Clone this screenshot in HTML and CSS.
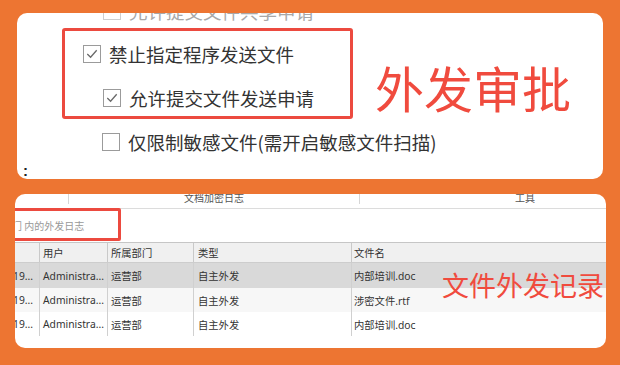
FILE: index.html
```html
<!DOCTYPE html>
<html lang="zh-CN">
<head>
<meta charset="utf-8">
<link rel="stylesheet" href="styles.css">
</head>
<body>
<div class="page">
  <section class="card card-top">
    <div class="opts">
      <div class="row faded">
        <span class="cb"></span>
        <span class="lbl">允许提交文件共享申请</span>
      </div>
      <div class="redbox">
        <div class="row">
          <span class="cb"><svg viewBox="0 0 17 17"><polyline points="3.5,8.5 7,12 13.5,4.5"/></svg></span>
          <span class="lbl">禁止指定程序发送文件</span>
        </div>
        <div class="row row-sub">
          <span class="cb"><svg viewBox="0 0 17 17"><polyline points="3.5,8.5 7,12 13.5,4.5"/></svg></span>
          <span class="lbl">允许提交文件发送申请</span>
        </div>
      </div>
      <div class="row row-last">
        <span class="cb"></span>
        <span class="lbl">仅限制敏感文件(需开启敏感文件扫描)</span>
      </div>
      <div class="colon">:</div>
    </div>
    <div class="title">外发审批</div>
  </section>

  <section class="card card-bottom">
    <div class="tabs">
      <div class="tab tab1"></div>
      <div class="tab tab2">文档加密日志</div>
      <div class="tab tab3">工具</div>
    </div>
    <div class="filter">
      <div class="filter-box">门 内的外发日志</div>
    </div>
    <div class="table">
      <div class="tr th">
        <div class="td c1"></div>
        <div class="td c2">用户</div>
        <div class="td c3">所属部门</div>
        <div class="td c4">类型</div>
        <div class="td c5">文件名</div>
      </div>
      <div class="tr sel">
        <div class="td c1">19...</div>
        <div class="td c2">Administra...</div>
        <div class="td c3">运营部</div>
        <div class="td c4">自主外发</div>
        <div class="td c5">内部培训.doc</div>
      </div>
      <div class="tr alt">
        <div class="td c1">19...</div>
        <div class="td c2">Administra...</div>
        <div class="td c3">运营部</div>
        <div class="td c4">自主外发</div>
        <div class="td c5">涉密文件.rtf</div>
      </div>
      <div class="tr">
        <div class="td c1">19...</div>
        <div class="td c2">Administra...</div>
        <div class="td c3">运营部</div>
        <div class="td c4">自主外发</div>
        <div class="td c5">内部培训.doc</div>
      </div>
    </div>
    <div class="note">文件外发记录</div>
  </section>
</div>
</body>
</html>
```

FILE: styles.css
```css
* { box-sizing: border-box; }
html, body { margin: 0; padding: 0; }
body {
  width: 620px;
  height: 365px;
  overflow: hidden;
  background: #ed7532;
  font-family: "Noto Sans", "Noto Sans CJK SC", sans-serif;
  color: #333;
}
.page {
  display: flex;
  flex-direction: column;
  padding-top: 13px;
}
.card {
  background: #fff;
  border-radius: 10px;
  overflow: hidden;
}
.card-top {
  margin-left: 17px;
  width: 586px;
  height: 166px;
  display: flex;
}
.opts {
  width: 345px;
  padding-left: 45px;
  display: flex;
  flex-direction: column;
  align-items: flex-start;
}
.row {
  display: flex;
  align-items: center;
  gap: 8px;
  height: 20px;
  font-family: "Noto Sans CJK SC", sans-serif;
  font-size: 18.5px;
  line-height: 20px;
  color: #333;
  white-space: nowrap;
}
.cb {
  width: 18px;
  height: 18px;
  flex: none;
  border: 1px solid #9b9b9b;
  background: #fff;
  display: flex;
}
.cb svg { width: 16px; height: 16px; }
.cb polyline {
  fill: none;
  stroke: #6a6a6a;
  stroke-width: 1.4;
}
.faded { margin-top: -12px; margin-left: 41px; color: #a8a8a8; }
.faded .cb { border-color: #cfcfcf; }
.redbox {
  margin-top: 7px;
  width: 291px;
  height: 94px;
  border: 3px solid #ec4a3f;
  border-radius: 3px;
  padding-top: 12.5px;
  padding-left: 18px;
}
.row-sub { margin-top: 24.5px; margin-left: 20px; }
.row-last { margin-top: 13px; margin-left: 40px; }
.colon {
  margin-top: 11px;
  margin-left: -39px;
  font-family: "Liberation Sans", sans-serif;
  font-size: 15px;
  line-height: 16px;
  font-weight: bold;
  color: #222;
}
.title {
  margin-left: 13px;
  margin-top: 49px;
  font-family: "Noto Sans CJK SC", sans-serif;
  font-size: 49px;
  line-height: 49px;
  color: #f04b3e;
  white-space: nowrap;
}

.card-bottom {
  margin-top: 15px;
  margin-left: 15px;
  width: 591px;
  height: 154px;
  position: relative;
  font-size: 10px;
}
.tabs {
  display: flex;
  height: 15px;
  border-bottom: 1px solid #dcdcdc;
  font-family: "Noto Sans CJK SC", sans-serif;
  color: #555;
}
.tab {
  flex: none;
  height: 10px;
  line-height: 7px;
  text-align: center;
  white-space: nowrap;
  overflow: hidden;
}
.tab1 { width: 53px; }
.tab2 { width: 291px; border-left: 1px solid #d6d6d6; }
.tab3 { width: 331px; border-left: 1px solid #d6d6d6; }
.filter {
  height: 33px;
  display: flex;
}
.filter-box {
  margin-top: -1px;
  margin-left: -10px;
  width: 116px;
  height: 33px;
  border: 3px solid #ec4a3f;
  border-radius: 2px;
  padding-left: 4px;
  padding-top: 2px;
  display: flex;
  align-items: center;
  font-family: "Noto Sans CJK SC", sans-serif;
  font-size: 10px;
  color: #999;
  white-space: pre;
}
.table { display: flex; flex-direction: column; }
.tr {
  display: grid;
  grid-template-columns: 24px 68px 86px 158px 1fr;
  height: 24px;
  align-items: stretch;
}
.th {
  height: 21px;
  background: #f0f0f0;
  border-top: 1px solid #c6c6c6;
  border-bottom: 1px solid #cdcdcd;
}
.sel { height: 25px; background: #d9d9d9; }
.alt { background: #f7f7f7; }
.td {
  display: flex;
  align-items: center;
  padding-left: 3px;
  white-space: nowrap;
  overflow: hidden;
  font-size: 10.3px;
  color: #333;
}
.td + .td { border-left: 1px solid #d0d0d0; }
.th .td + .td { border-left-color: #c9c9c9; }
.c1 { padding-left: 0; text-indent: -2px; }
.c4 { padding-left: 4px; }
.c5 { padding-left: 2px; }
.note {
  position: absolute;
  left: 427px;
  top: 77px;
  font-family: "Noto Sans CJK SC", sans-serif;
  font-size: 27px;
  line-height: 27px;
  color: #f04b3e;
  white-space: nowrap;
}
```
